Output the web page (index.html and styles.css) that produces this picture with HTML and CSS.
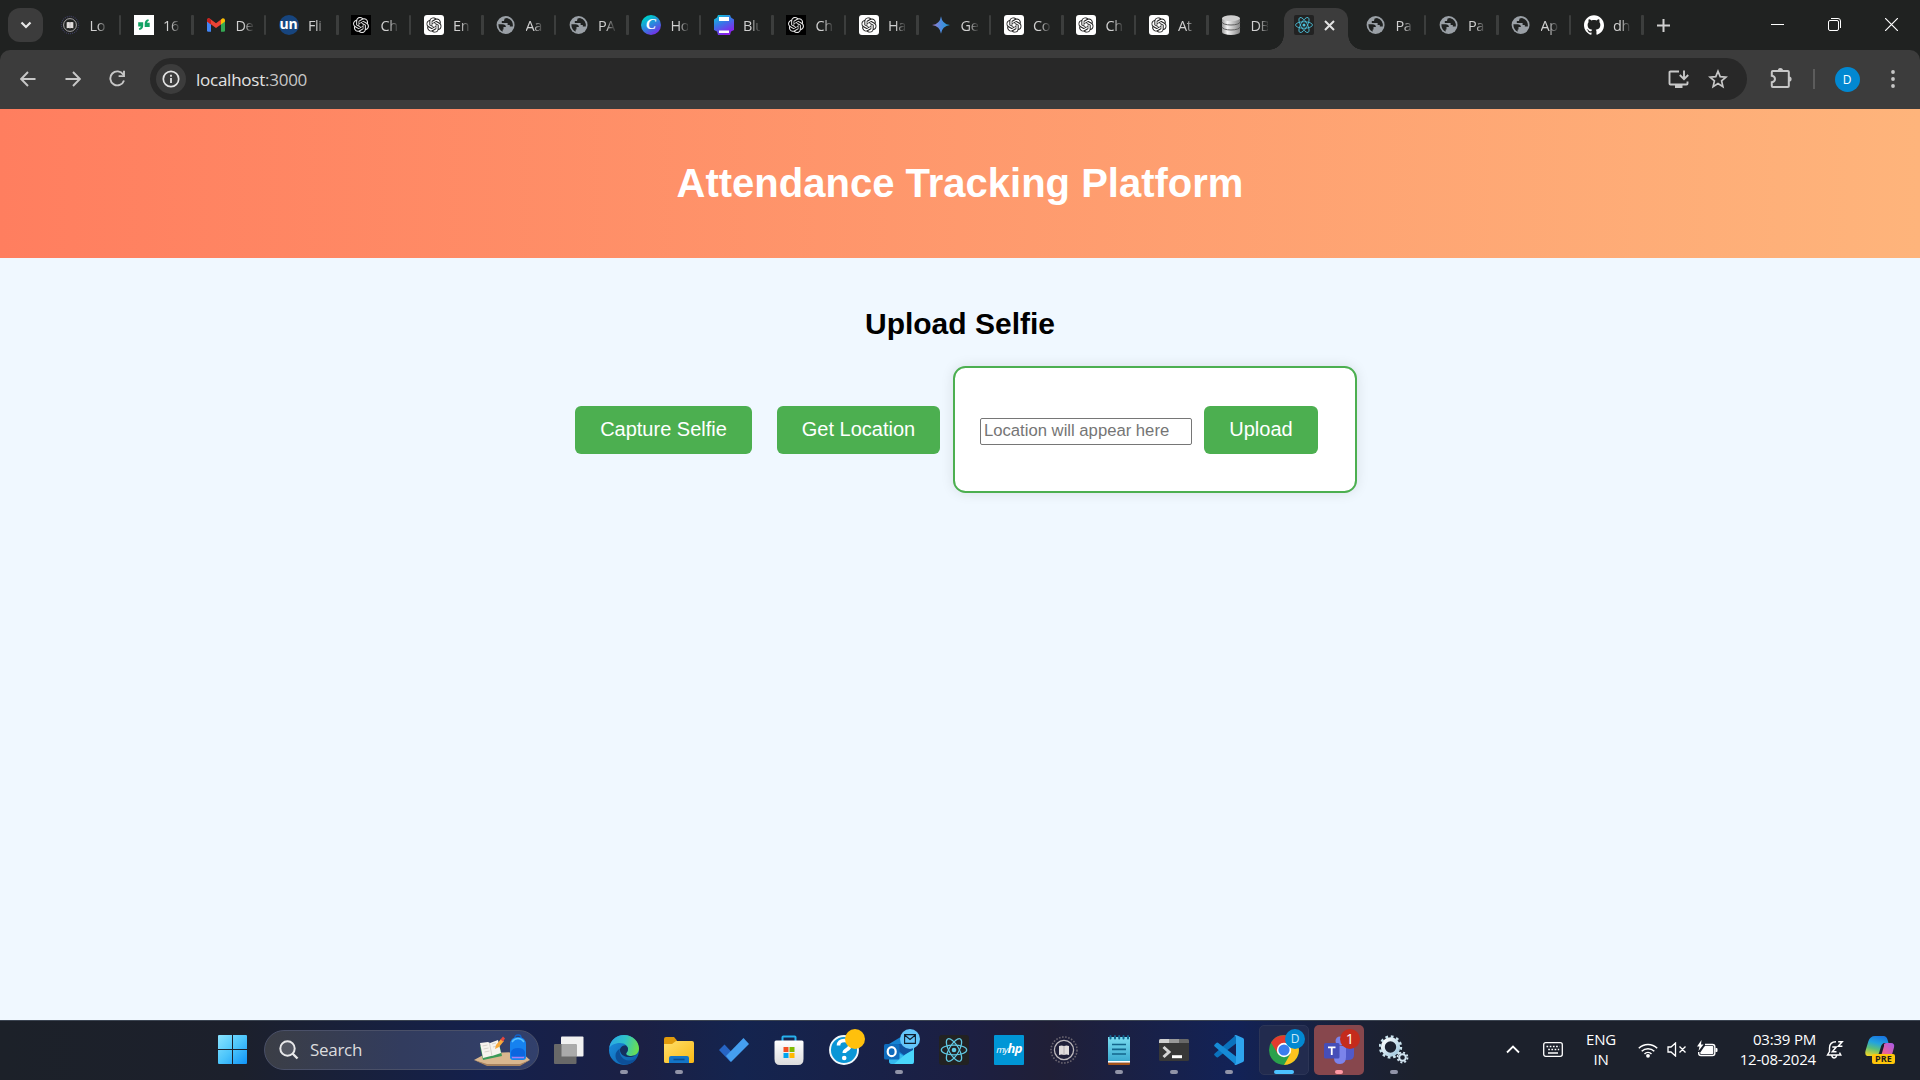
FILE: index.html
```html
<!DOCTYPE html>
<html lang="en">
<head>
<meta charset="utf-8">
<title>Attendance Tracking Platform</title>
<link rel="stylesheet" href="styles.css">
</head>
<body>
<svg class="sprite" aria-hidden="true">
  <defs>
    <linearGradient id="blue-g" x1="0" y1="0" x2=".5" y2="1"><stop offset="0" stop-color="#08cfd4"/><stop offset=".5" stop-color="#3a73e8"/><stop offset="1" stop-color="#8a22ec"/></linearGradient>
    <linearGradient id="gem-g" x1="0" y1="0" x2="1" y2="0"><stop offset="0" stop-color="#a57ac8"/><stop offset=".5" stop-color="#4c8ce0"/><stop offset="1" stop-color="#1c9ad0"/></linearGradient>
    <linearGradient id="db-g" x1="0" y1="0" x2="1" y2="0"><stop offset="0" stop-color="#9a9a9a"/><stop offset=".3" stop-color="#f4f4f4"/><stop offset="1" stop-color="#858585"/></linearGradient>
    <linearGradient id="win-g" gradientUnits="userSpaceOnUse" x1="0" y1="0" x2="29" y2="29"><stop offset="0" stop-color="#8be4ff"/><stop offset=".5" stop-color="#4cc5fb"/><stop offset="1" stop-color="#0f93f7"/></linearGradient>
    <linearGradient id="edge-g" x1="0" y1=".3" x2="1" y2=".5"><stop offset="0" stop-color="#2aa7e6"/><stop offset=".5" stop-color="#2fc3c9"/><stop offset="1" stop-color="#6be04e"/></linearGradient>
    <linearGradient id="edge-b" x1="0" y1="0" x2="1" y2="1"><stop offset="0" stop-color="#1b93e2"/><stop offset="1" stop-color="#0c59a4"/></linearGradient>
    <linearGradient id="folder-g" x1="0" y1="0" x2="1" y2="1"><stop offset="0" stop-color="#ffdf6b"/><stop offset="1" stop-color="#fbb914"/></linearGradient>
    <linearGradient id="note-g" x1="0" y1="0" x2="0" y2="1"><stop offset="0" stop-color="#7adcf0"/><stop offset="1" stop-color="#38a8cf"/></linearGradient>
    <linearGradient id="cop-a" x1=".6" y1="0" x2=".3" y2="1"><stop offset="0" stop-color="#1a78e0"/><stop offset=".35" stop-color="#22a3e0"/><stop offset=".65" stop-color="#5cbf7a"/><stop offset="1" stop-color="#e7d52c"/></linearGradient>
    <linearGradient id="cop-b" x1="1" y1="0" x2="0" y2="1"><stop offset="0" stop-color="#a45aea"/><stop offset=".6" stop-color="#e8609f"/><stop offset="1" stop-color="#fb8c4e"/></linearGradient>
    <linearGradient id="store-g" x1="0" y1="0" x2="0" y2="1"><stop offset="0" stop-color="#fff"/><stop offset="1" stop-color="#dcdcdc"/></linearGradient>
    <linearGradient id="gear-g" x1="0" y1="0" x2="1" y2="1"><stop offset="0" stop-color="#fff"/><stop offset="1" stop-color="#9ec6de"/></linearGradient>
  </defs>
  <symbol id="openai" viewBox="0 0 24 24"><path d="M22.2819 9.8211a5.9847 5.9847 0 0 0-.5157-4.9108 6.0462 6.0462 0 0 0-6.5098-2.9A6.0651 6.0651 0 0 0 4.9807 4.1818a5.9847 5.9847 0 0 0-3.9977 2.9 6.0462 6.0462 0 0 0 .7427 7.0966 5.98 5.98 0 0 0 .511 4.9107 6.051 6.051 0 0 0 6.5146 2.9001A5.9847 5.9847 0 0 0 13.2599 24a6.0557 6.0557 0 0 0 5.7718-4.2058 5.9894 5.9894 0 0 0 3.9977-2.9001 6.0557 6.0557 0 0 0-.7475-7.0729zm-9.022 12.6081a4.4755 4.4755 0 0 1-2.8764-1.0408l.1419-.0804 4.7783-2.7582a.7948.7948 0 0 0 .3927-.6813v-6.7369l2.02 1.1686a.071.071 0 0 1 .038.052v5.5826a4.504 4.504 0 0 1-4.4945 4.4944zm-9.6607-4.1254a4.4708 4.4708 0 0 1-.5346-3.0137l.142.0852 4.783 2.7582a.7712.7712 0 0 0 .7806 0l5.8428-3.3685v2.3324a.0804.0804 0 0 1-.0332.0615L9.74 19.9502a4.4992 4.4992 0 0 1-6.1408-1.6464zM2.3408 7.8956a4.485 4.485 0 0 1 2.3655-1.9728V11.6a.7664.7664 0 0 0 .3879.6765l5.8144 3.3543-2.0201 1.1685a.0757.0757 0 0 1-.071 0l-4.8303-2.7865A4.504 4.504 0 0 1 2.3408 7.872zm16.5963 3.8558L13.1038 8.364 15.1192 7.2a.0757.0757 0 0 1 .071 0l4.8303 2.7913a4.4944 4.4944 0 0 1-.6765 8.1042v-5.6772a.79.79 0 0 0-.407-.667zm2.0107-3.0231l-.142-.0852-4.7735-2.7818a.7759.7759 0 0 0-.7854 0L9.409 9.2297V6.8974a.0662.0662 0 0 1 .0284-.0615l4.8303-2.7866a4.4992 4.4992 0 0 1 6.6802 4.66zM8.3065 12.863l-2.02-1.1638a.0804.0804 0 0 1-.038-.0567V6.0742a4.4992 4.4992 0 0 1 7.3757-3.4537l-.142.0805L8.704 5.459a.7948.7948 0 0 0-.3927.6813zm1.0976-2.3654l2.602-1.4998 2.6069 1.4998v2.9994l-2.5974 1.4997-2.6067-1.4997Z" fill="currentColor"/></symbol>
  <symbol id="gpt-dark" viewBox="0 0 20 20"><rect width="20" height="20" fill="#000"/><use href="#openai" x="2" y="2" width="16" height="16" color="#e6e6e6"/></symbol>
  <symbol id="gpt-light" viewBox="0 0 20 20"><rect width="20" height="20" rx="3" fill="#fff"/><use href="#openai" x="2.3" y="2.3" width="15.4" height="15.4" color="#222"/></symbol>
  <symbol id="globe" viewBox="0 0 20 20"><circle cx="9.600" cy="10" r="9" fill="#9aa0a6"/><path d="M2.400 9.300H6.500q3.300 0 3.400 2.800H7.500v2.300h-.8l-.1 2.400Q2.300 14.500 2.400 9.300zM11 2.900L8.600 3.500 8 6H5.800v2h5.800v2h2.200v1.600h3Q17.500 5 11 2.900z" fill="#202221"/></symbol>
  <symbol id="seal" viewBox="0 0 30 30"><circle cx="15" cy="15" r="13" fill="none" stroke="var(--ring)" stroke-width="1.600" stroke-dasharray="1.600 1.500"/><circle cx="15" cy="15" r="9.600" fill="none" stroke="#bdb9bd" stroke-width="1.300"/><path d="M10 11q2.500-1 5 0q2.500-1 5 0v9q-2.500-1-5 0q-2.500-1-5 0z" fill="#e0dcdc"/><path d="M15 11v9" stroke="#a09ca0" stroke-width=".7"/></symbol>
  <symbol id="react" viewBox="0 0 30 30"><rect width="30" height="30" rx="3" fill="#222"/><circle cx="15" cy="15" r="2.300" fill="currentColor"/><g fill="none" stroke="currentColor" stroke-width="1.250"><ellipse cx="15" cy="15" rx="12.700" ry="4.900"/><ellipse cx="15" cy="15" rx="12.700" ry="4.900" transform="rotate(60 15 15)"/><ellipse cx="15" cy="15" rx="12.700" ry="4.900" transform="rotate(120 15 15)"/></g></symbol>
</svg>

<header class="tabstrip">
  <button class="tab-search" aria-label="Search tabs"><svg width="12" height="8" viewBox="0 0 12 8"><path d="M1.500 1.500L6 6l4.500-4.500" fill="none" stroke="#e8e8e8" stroke-width="2.200"/></svg></button>
  <nav class="tabs">
    <div class="tab first"><svg class="fav seal"><use href="#seal"/></svg><span>Lo</span></div>
    <div class="tab"><svg class="fav" viewBox="0 0 20 20"><rect width="20" height="20" fill="#fff"/><path d="M4.200 7.200h5v3.500q0 3.500-3.800 4.300l-.6-1.600q1.800-.5 2-2h-2.600zM15.700 12h-5V8.500q0-3.500 3.600-4.300l.6 1.600q-1.600.5-1.800 2h2.600z" fill="#12a365"/></svg><span>16</span></div>
    <div class="tab"><svg class="fav" viewBox="0 0 20 20"><path d="M1 6v9.500q0 1.300 1.300 1.300H5V8z" fill="#4285f4"/><path d="M19 6v9.500q0 1.300-1.300 1.300H15V8z" fill="#34a853"/><path d="M15 4.500V9.500l4-3V5q-.2-2-2.400-1.700z" fill="#fbbc04"/><path d="M1 5v1.500L10 13l5-3.500V4.500L10 8.200 4 3.700Q1.300 2.500 1 5z" fill="#ea4335"/><path d="M1 5v1.500l4 3V4.400L3.500 3.400Q1.200 3 1 5z" fill="#c5221f"/></svg><span>De</span></div>
    <div class="tab"><span class="fav un">un</span><span>Fli</span></div>
    <div class="tab"><svg class="fav"><use href="#gpt-dark"/></svg><span>Ch</span></div>
    <div class="tab"><svg class="fav"><use href="#gpt-light"/></svg><span>En</span></div>
    <div class="tab"><svg class="fav"><use href="#globe"/></svg><span>Aa</span></div>
    <div class="tab"><svg class="fav"><use href="#globe"/></svg><span>PA</span></div>
    <div class="tab"><span class="fav canva">C</span><span>Ho</span></div>
    <div class="tab"><svg class="fav" viewBox="0 0 20 20"><path d="M4 0h12l1 2.500 3 2V15l-3 1.500L16 20H4l-1-3.500L0 15V4.500l3-2z" fill="url(#blue-g)"/><path d="M5 2h10v4H5zM5 15.500h10V18H5z" fill="#fff"/></svg><span>Blu</span></div>
    <div class="tab"><svg class="fav"><use href="#gpt-dark"/></svg><span>Ch</span></div>
    <div class="tab"><svg class="fav"><use href="#gpt-light"/></svg><span>Ha</span></div>
    <div class="tab"><svg class="fav" viewBox="0 0 20 20"><path d="M10 1.200Q11 9 19 10Q11 11 10 18.800Q9 11 1 10Q9 9 10 1.200z" fill="url(#gem-g)"/></svg><span>Ge</span></div>
    <div class="tab"><svg class="fav"><use href="#gpt-light"/></svg><span>Co</span></div>
    <div class="tab"><svg class="fav"><use href="#gpt-light"/></svg><span>Ch</span></div>
    <div class="tab"><svg class="fav"><use href="#gpt-light"/></svg><span>At</span></div>
    <div class="tab before-active"><svg class="fav" viewBox="0 0 20 20"><path d="M1 3v14a9 3 0 0 0 18 0V3z" fill="url(#db-g)"/><ellipse cx="10" cy="3.200" rx="9" ry="2.900" fill="#cfcfcf"/><path d="M1 7a9 3 0 0 0 18 0M1 12a9 3 0 0 0 18 0" fill="none" stroke="#555" stroke-width=".9"/></svg><span>DB</span></div>
    <div class="tab active"><svg class="fav cyan"><use href="#react"/></svg><svg class="close" width="11" height="11" viewBox="0 0 11 11"><path d="M1 1l9 9M10 1l-9 9" stroke="#e3e3e3" stroke-width="2"/></svg></div>
    <div class="tab"><svg class="fav"><use href="#globe"/></svg><span>Pa</span></div>
    <div class="tab"><svg class="fav"><use href="#globe"/></svg><span>Pa</span></div>
    <div class="tab"><svg class="fav"><use href="#globe"/></svg><span>Ap</span></div>
    <div class="tab"><svg class="fav" viewBox="0 0 24 24"><path d="M12 .297c-6.630 0-12 5.373-12 12 0 5.303 3.438 9.800 8.205 11.385.6.113.82-.258.82-.577 0-.285-.01-1.040-.015-2.040-3.338.724-4.042-1.610-4.042-1.610C4.422 18.070 3.633 17.700 3.633 17.700c-1.087-.744.084-.729.084-.729 1.205.084 1.838 1.236 1.838 1.236 1.070 1.835 2.809 1.305 3.495.998.108-.776.417-1.305.76-1.605-2.665-.3-5.466-1.332-5.466-5.930 0-1.310.465-2.380 1.235-3.220-.135-.303-.54-1.523.105-3.176 0 0 1.005-.322 3.300 1.230.96-.267 1.980-.399 3-.405 1.020.006 2.040.138 3 .405 2.280-1.552 3.285-1.230 3.285-1.230.645 1.653.24 2.873.12 3.176.765.84 1.230 1.910 1.230 3.220 0 4.610-2.805 5.625-5.475 5.920.42.36.81 1.096.81 2.220 0 1.606-.015 2.896-.015 3.286 0 .315.21.69.825.57C20.565 22.092 24 17.592 24 12.297c0-6.627-5.373-12-12-12" fill="#fff"/></svg><span>dh</span></div>
  </nav>
  <button class="new-tab" aria-label="New tab"><svg width="13" height="13" viewBox="0 0 13 13"><path d="M6.500 0v13M0 6.500h13" stroke="#d0d0d0" stroke-width="2"/></svg></button>
  <div class="window-controls">
    <svg width="13" height="13" viewBox="0 0 13 13"><path d="M0 6.500h13" stroke="#fff"/></svg>
    <svg width="13" height="13" viewBox="0 0 13 13" fill="none" stroke="#fff"><rect x=".5" y="2.500" width="10" height="10" rx="1.500"/><path d="M3 .5h7q2.500 0 2.500 2.500v7"/></svg>
    <svg width="13" height="13" viewBox="0 0 13 13"><path d="M0 0l13 13M13 0L0 13" stroke="#fff" stroke-width="1.200"/></svg>
  </div>
</header>

<div class="toolbar-back">
<div class="toolbar">
  <button class="nav" aria-label="Back"><svg width="16" height="16" viewBox="0 0 16 16"><path d="M15.500 8H1.500M8 1L1.200 8 8 15" fill="none" stroke="#c7c7c7" stroke-width="1.900"/></svg></button>
  <button class="nav" aria-label="Forward"><svg width="16" height="16" viewBox="0 0 16 16"><path d="M.5 8h14M8 1l6.800 7L8 15" fill="none" stroke="#c7c7c7" stroke-width="1.900"/></svg></button>
  <button class="nav" aria-label="Reload"><svg width="17" height="17" viewBox="0 0 17 17"><path d="M14.200 4.500A7 7 0 1 0 15 10.500M15 .8v5.300H9.600" fill="none" stroke="#c7c7c7" stroke-width="1.900"/></svg></button>
  <div class="omnibox">
    <span class="site-info"><svg width="18" height="18" viewBox="0 0 18 18"><circle cx="9" cy="9" r="7.700" fill="none" stroke="#e3e3e3" stroke-width="1.700"/><path d="M9 8v5M9 4.800v1.900" stroke="#e3e3e3" stroke-width="1.800"/></svg></span>
    <span class="url">localhost<em>:3000</em></span>
    <svg class="install" width="21" height="19" viewBox="0 0 21 19"><path d="M11 1.500H2.500Q1.500 1.500 1.500 2.500v11q0 1 1 1h16q1 0 1-1V11.500M16 .5v8M11.800 5l4.200 4.200L20.200 5" fill="none" stroke="#c7c7c7" stroke-width="1.900"/><path d="M7 15h7.500v3H7z" fill="#c7c7c7"/></svg>
    <svg width="20" height="20" viewBox="0 0 20 20"><path d="M10 2.200l2.200 5.400 5.800.5-4.400 3.800 1.300 5.700-4.900-3-4.900 3 1.300-5.700L2 8.100l5.800-.5z" fill="none" stroke="#c7c7c7" stroke-width="1.700"/></svg>
  </div>
  <span class="extensions"><svg width="22" height="22" viewBox="0 0 22 22"><path d="M2.800 4h15q1 0 1 1v14q0 1-1 1h-15q-1 0-1-1v-3.800q3.200-.6 3.200-3.200t-3.200-3.200V5q0-1 1-1z" fill="none" stroke="#c7c7c7" stroke-width="2"/><path d="M7.800 3.500a2.600 2.600 0 0 1 5.200 0zM19 9.400a2.600 2.600 0 0 1 0 5.200z" fill="#c7c7c7"/></svg></span>
  <span class="divider"></span>
  <span class="profile"><b>D</b></span>
  <span class="menu"><svg width="4" height="18" viewBox="0 0 4 18" fill="#c7c7c7"><circle cx="2" cy="2" r="1.900"/><circle cx="2" cy="9" r="1.900"/><circle cx="2" cy="16" r="1.900"/></svg></span>
</div>
</div>

<main class="page">
  <div class="banner"><h1>Attendance Tracking Platform</h1></div>
  <section class="upload">
    <h2>Upload Selfie</h2>
    <div class="actions">
      <button class="btn capture">Capture Selfie</button>
      <button class="btn locate">Get Location</button>
      <form class="card">
        <input type="text" placeholder="Location will appear here">
        <button type="button" class="btn send">Upload</button>
      </form>
    </div>
  </section>
</main>

<footer class="taskbar">
  <svg class="start" width="29" height="29" viewBox="0 0 29 29"><path d="M0 1q0-1 1-1h13v14H0zM15 0h13q1 0 1 1v13H15zM0 15h14v14H1q-1 0-1-1zM15 15h14v13q0 1-1 1H15z" fill="url(#win-g)"/></svg>
  <div class="search">
    <svg width="20" height="20" viewBox="0 0 20 20"><circle cx="8.500" cy="8.500" r="7.200" fill="#ffffff22" stroke="#e8e8ea" stroke-width="2"/><path d="M13.500 13.500l5 5" stroke="#e8e8ea" stroke-width="2.400"/></svg>
    <span>Search</span>
    <svg class="highlight" width="58" height="32" viewBox="0 0 58 32">
      <path d="M1 26L14 19 48 18 57 26 47 31H14z" fill="#d9b78f"/><path d="M1 26l13 4h33l10-4-10 6H14z" fill="#a8835f"/>
      <path d="M7 12l3 14 19-4-3-13z" fill="#3b9a58"/><path d="M7 9l8-1 2 1 8-3 3 13-9 3-1 0-8 2z" fill="#f5f3ee"/><path d="M16.500 9l2.500 13M9.500 12l5-1M10.500 15l5-1M11.500 18l5-1M19 10l4-1M20 13l4-1" stroke="#c9c4bc" stroke-width=".7"/>
      <path d="M22 15l1-4 5-6 3 2-5 6z" fill="#f7a93c"/><path d="M27.500 5.500L30 2.500l2 2-2 3z" fill="#e4473e"/>
      <rect x="42" y="1" width="6" height="6" rx="2.500" fill="none" stroke="#1262c9" stroke-width="1.300"/><path d="M37 11q0-8 8-8t8 8v12q0 3-3 3H40q-3 0-3-3z" fill="#1682ef"/><path d="M38 18q1-4 7-4t7 4v4q-7 3-14 0z" fill="#0b66e0"/><path d="M39 8q2.500-3.500 6-3.500t6 3.500" fill="none" stroke="#5ac3ff" stroke-width="1.300"/><path d="M39 23.500h12" stroke="#a87ff2" stroke-width="1.500"/>
    </svg>
  </div>
  <div class="apps">
    <div class="app"><svg viewBox="0 0 30 30"><rect x="7" y="1.500" width="22.500" height="20" rx="1" fill="#f1f1f1"/><rect y="9" width="22.500" height="20" rx="1" fill="#686868"/><path d="M7.500 9h14q1 0 1 1v11.500H7.500z" fill="#aaa"/></svg></div>
    <div class="app run"><svg viewBox="0 0 30 30"><circle cx="15" cy="15" r="15" fill="url(#edge-b)"/><path d="M.2 13C1.500 5 7.500 0 15 0c9 0 15 6.500 15 13.500 0 4.500-3.500 7.500-7.800 7.500-4 0-5.200-1.600-5-2.600.1-.7 1.800-1.500 1.800-4.400C19 11 16 8 11 8 5.500 8 1.500 10.500.2 13z" fill="url(#edge-g)"/><path d="M11 13.500c-1.500 5 2 11.500 8.500 12 4 .3 6.500-1.200 8.300-2.300-3.500 5.500-10 7.500-15 5.800C5 26 4.500 17 11 13.500z" fill="#0d4f98"/><path d="M17.200 18.400c.1-.7 1.800-1.500 1.800-4.400 0-1.500-1-2.800-2.500-3.700-3.500.3-5.700 2.500-5.500 5.200.2 3.500 4 7.300 11 6.500 3-.3 5-1.700 6.200-3.200-1.600 1.400-3.700 2.200-6 2.200-4 0-5.200-1.600-5-2.600z" fill="#14305f"/></svg></div>
    <div class="app run"><svg viewBox="0 0 30 30"><path d="M0 4q0-2 2-2h8l3 3.500V12H0z" fill="#e09a0c"/><path d="M0 9h8l4-3h16q2 0 2 2v18.500q0 1.500-2 1.500H2q-2 0-2-1.500z" fill="url(#folder-g)"/><path d="M5 28v-5q0-2 2-2h16q2 0 2 2v5z" fill="#1375c8"/><path d="M9.500 24.500h11" stroke="#0b4d90" stroke-width="1.600"/></svg></div>
    <div class="app"><svg viewBox="0 0 30 30"><path d="M0 15l5.500-5.500 9.500 10L11.500 27z" fill="#2765c5"/><path d="M24.500 3l5.500 6-18 18-5-6z" fill="#459ff0"/></svg></div>
    <div class="app"><svg viewBox="0 0 30 30"><path d="M8.500 6V2.300q0-.8.8-.8h11.400q.8 0 .8.8V6" fill="none" stroke="#27b1ee" stroke-width="2"/><path d="M.5 7q0-1.500 1.500-1.500h26q1.500 0 1.500 1.500v17q0 6-5.500 6H6q-5.500 0-5.500-6z" fill="url(#store-g)"/><path d="M9.500 12h5v5h-5z" fill="#f25022"/><path d="M15.500 12h5v5h-5z" fill="#7fba00"/><path d="M9.500 18h5v5h-5z" fill="#00a4ef"/><path d="M15.500 18h5v5h-5z" fill="#ffb900"/></svg></div>
    <div class="app help"><svg viewBox="0 0 30 30"><circle cx="15" cy="15" r="14" fill="#0a96d6" stroke="#f2f8fb" stroke-width="1.900"/><path d="M9.500 10.500q0-5 5.800-5 5.700 0 5.700 4.500 0 3-3.500 4.800-2.200 1.200-2.200 3.200" fill="none" stroke="#fff" stroke-width="3.600"/><circle cx="15.200" cy="23" r="2.300" fill="#fff"/></svg><i class="badge amber"></i></div>
    <div class="app run"><svg viewBox="0 0 30 30"><path d="M5 9L20 0l10 9v17q0 3-3 3H8q-3 0-3-3z" fill="#1683d3"/><path d="M5 11l25 17q-1 1-3 1H8q-3 0-3-3z" fill="#35b9ee"/><path d="M30 12v14q0 3-3 3H10z" fill="#4ad7fb"/><path d="M13 9h16v6l-9 5-7-5z" fill="#10529f"/><rect y="9" width="15.500" height="15.500" rx="1.500" fill="#0f6cbd"/><ellipse cx="7.700" cy="16.700" rx="4" ry="4.500" fill="none" stroke="#fff" stroke-width="2.200"/></svg><i class="badge mail"><svg viewBox="0 0 12 10"><path d="M.6.6h10.800v8.800H.6zM.6 1L6 5.500 11.400 1" fill="none" stroke="#102030" stroke-width="1.100"/></svg></i></div>
    <div class="app react"><svg><use href="#react"/></svg></div>
    <div class="app"><span class="myhp">my<b>hp</b></span></div>
    <div class="app sealapp"><svg><use href="#seal"/></svg></div>
    <div class="app run"><svg viewBox="0 0 30 30"><path d="M4 2h22v25H4z" fill="url(#note-g)"/><path d="M4 26h22v1.800H4z" fill="#fff"/><path d="M4 27.800h22V29q0 1-1 1H5q-1 0-1-1z" fill="#a4531a"/><path d="M6.500 1v2.500M11 1v2.500M15.200 1v2.500M19.500 1v2.500M24 1v2.500" stroke="#12648e" stroke-width="2" stroke-linecap="round"/><path d="M8 9.500h14M8 14.300h14M8 19h14" stroke="#13658c" stroke-width="1.700"/></svg></div>
    <div class="app run"><svg viewBox="0 0 30 30"><rect y="4" width="30" height="22" rx="1.500" fill="#383838"/><path d="M0 8V5.500Q0 4 1.500 4H10v4z" fill="#d0d0d0"/><path d="M10 4h10v4H10z" fill="#999"/><path d="M20 4h8.500Q30 4 30 5.500V8H20z" fill="#686868"/><path d="M4.500 12l5.500 5-5.500 5" fill="none" stroke="#d5d5d5" stroke-width="3"/><path d="M13 21.700h10" stroke="#fff" stroke-width="3"/></svg></div>
    <div class="app run"><svg viewBox="0 0 30 30"><path d="M22 0v8.500L4 22.200q-1 .6-1.800-.2L.5 20.300q-.8-1 .2-1.800z" fill="#0a72bd"/><path d="M22 30v-8.500L4 7.800q-1-.6-1.800.2L.5 9.700q-.8 1 .2 1.800z" fill="#168bd6"/><path d="M22 0l7 3q1 .5 1 1.700v20.600q0 1.200-1 1.700l-7 3q-1 0-2-1.200 2 .7 2-1.300v-25q0-2-2-1.300Q21 0 22 0z" fill="#2ea4ee"/></svg></div>
    <div class="app chrome"><svg viewBox="0 0 30 30"><circle cx="15" cy="15" r="15" fill="#2aa14b"/><path d="M15 8h13.200A15 15 0 0 1 15 30l6.300-11z" fill="#fcc31e"/><path d="M2 7.500L9 19l6-11h13A15 15 0 0 0 2 7.500z" fill="#e33b2e"/><circle cx="15" cy="15" r="7.200" fill="#fff"/><circle cx="15" cy="15" r="5.600" fill="#3b7ded"/></svg><i class="badge user">D</i></div>
    <div class="app teams"><svg viewBox="0 0 30 30"><circle cx="16" cy="6" r="4.500" fill="#7b83eb"/><path d="M20 11h8q2 0 2 2v7q0 5-6 5h-4z" fill="#5059c9"/><path d="M10 11h12v11q0 7-6 7t-6-6z" fill="#7b83eb"/><rect y="8" width="15.500" height="15.500" rx="1.500" fill="#464eb8"/><path d="M4 12.300h7.500M7.750 12.300V20" stroke="#fff" stroke-width="1.800"/></svg><i class="badge alert">1</i></div>
    <div class="app run"><svg viewBox="0 0 30 30"><circle cx="11.500" cy="12" r="7.700" fill="none" stroke="url(#gear-g)" stroke-width="4"/><circle cx="11.500" cy="12" r="10.400" fill="none" stroke="#c9e2ec" stroke-width="2.600" stroke-dasharray="2.700 2.746"/><circle cx="23.500" cy="22.500" r="3.300" fill="none" stroke="#d3e5f1" stroke-width="2"/><circle cx="23.500" cy="22.500" r="5" fill="none" stroke="#d3e5f1" stroke-width="1.800" stroke-dasharray="1.963"/></svg></div>
  </div>
  <div class="tray">
    <span class="t40"><svg width="14" height="9" viewBox="0 0 14 9"><path d="M1 7.500l6-6 6 6" fill="none" stroke="#fff" stroke-width="1.800"/></svg></span>
    <span class="t40"><svg width="20" height="15" viewBox="0 0 20 15"><rect x=".7" y=".7" width="18.600" height="13.600" rx="2" fill="none" stroke="#fff" stroke-width="1.300"/><path d="M3.500 4.500h13M5.200 7.500h11" stroke="#fff" stroke-width="1.700" stroke-dasharray="1.700 1.500"/><path d="M5 11h10" stroke="#fff" stroke-width="1.500"/></svg></span>
    <span class="lang">ENG<br>IN</span>
    <span class="wifi"><svg width="20" height="16" viewBox="0 0 20 16"><path d="M.8 6.200a13 13 0 0 1 18.400 0M3.700 9.200a9 9 0 0 1 12.600 0M6.500 12a5 5 0 0 1 7 0" fill="none" stroke="#fff" stroke-width="1.500"/><circle cx="10" cy="13.800" r="1.900" fill="#fff"/></svg></span>
    <span class="volume"><svg width="20" height="15" viewBox="0 0 20 15"><path d="M1 5h3l4.500-4v13L4 10H1zM12.500 4.500l6 6M18.500 4.500l-6 6" fill="none" stroke="#fff" stroke-width="1.300"/></svg></span>
    <span class="battery"><svg width="21" height="17" viewBox="0 0 21 17"><path d="M8 4.500h7.500q2.300 0 2.300 2.300v6.400q0 2.300-2.300 2.300H4q-2.300 0-2.300-2.300V12" fill="none" stroke="#fff" stroke-width="1.400"/><path d="M7 7l1-1h7.500q.8 0 .8.8v6.400q0 .8-.8.8H4l-1-1zM18.500 8h1q1 0 1 1v2q0 1-1 1h-1zM4.500 0L0 6.500h2.500L1.500 11 6.500 4.500H4z" fill="#fff"/></svg></span>
    <span class="clock">03:39 PM<br>12-08-2024</span>
    <span class="bell"><svg width="18" height="19" viewBox="0 0 18 19"><path d="M10 1.700Q3.500 1.700 3.500 8v3.500L1.500 15h13.300l-1.300-2.300M5.700 15.500q.7 2.500 2.500 2.500t2.500-2.500" fill="none" stroke="#fff" stroke-width="1.400"/><path d="M6.300 7h4l-4 4.800h4.200M12.200 1.700h4l-4 4.600h4.200" fill="none" stroke="#fff" stroke-width="1.500"/></svg></span>
    <span class="copilot"><svg width="30" height="28" viewBox="0 0 30 28"><path d="M2 20Q-.5 19 .6 14.500L3.300 5.500Q5 0 10 0h8.500q3 0 4 3.500l1 3.500H20q-3 0-4 3.500l-2 6.500q-1.200 3-4 3z" fill="url(#cop-a)"/><path d="M18 7h8q4 0 3 4.500l-2 7q-1 3.500-5 3.500h-8q2-1 3-5l2-7q.7-2-1-3z" fill="url(#cop-b)"/><path d="M18 7h3.500q-3 0-4 3.500l-2.500 7.500q-1 2-3 2h2q1.500-1.500 2.500-4l2-6.500q.6-2-.5-2.500z" fill="#151b2c"/></svg><i>PRE</i></span>
  </div>
</footer>
</body>
</html>
```
FILE: styles.css
```css
* { box-sizing: border-box; }
body {
  margin: 0;
  width: 1920px;
  height: 1080px;
  display: flex;
  flex-direction: column;
  overflow: hidden;
  font-family: "Open Sans", "Noto Sans", sans-serif;
  background: #f0f8ff;
}
button { border: 0; padding: 0; background: none; font: inherit; }
svg { display: block; flex: none; }
.sprite { position: absolute; width: 0; height: 0; }

/* Tab strip */
.tabstrip { height: 50px; flex: none; display: flex; background: #202221; padding-left: 8px; }
.tab-search { width: 35px; height: 34px; margin: 8px 5.5px 0 0; border-radius: 12px; background: #3c3c3c; display: grid; place-items: center; }
.tabs { display: flex; width: 1595px; }
.tab { position: relative; width: 72.5px; flex: none; height: 50px; padding-left: 12.5px; display: flex; align-items: center; gap: 10px; }
.tab::after { content: ""; position: absolute; right: 0; top: 15px; width: 2.5px; height: 20px; border-radius: 1px; background: #3c3e3d; }
.tab.before-active::after { display: none; }
.tab.first { padding-left: 11.5px; }
.tab span:last-child {
  width: 17px; margin-left: -.5px; overflow: hidden; white-space: nowrap;
  font-size: 14.5px; letter-spacing: -.4px; line-height: 22px; padding-top: 1px; color: #d0d0d0;
  -webkit-mask-image: linear-gradient(90deg, #000 45%, rgba(0,0,0,.2) 92%);
  mask-image: linear-gradient(90deg, #000 45%, rgba(0,0,0,.2) 92%);
}
.fav { width: 20px; height: 20px; flex: none; position: relative; z-index: 1; }
.fav.seal { --ring: #3f3f62; }
.fav.cyan { color: #4cc3dd; }
.un { border-radius: 50%; background: #17457e; color: #fff; font: bold 14px/17px "Open Sans", sans-serif; text-align: center; letter-spacing: -.3px; }
.canva { border-radius: 50%; background: linear-gradient(150deg, #00c8cc 20%, #2c86dd 50%, #7a26e8 90%); color: #fff; font: italic bold 15px/19px "Liberation Serif", serif; text-align: center; }
.tab.active::before {
  content: ""; position: absolute; left: 2.5px; right: 5.5px; top: 7.5px; bottom: 0;
  border-radius: 12px 12px 0 0; background: #3c3c3c;
}
.tab.active::after {
  left: -12.5px; right: -9.5px; top: 35px; width: auto; height: 15px; border-radius: 0;
  background:
    radial-gradient(circle at 0 0, transparent 14.5px, #3c3c3c 15px) left / 15px 15px no-repeat,
    radial-gradient(circle at 100% 0, transparent 14.5px, #3c3c3c 15px) right / 15px 15px no-repeat;
}
.close { position: relative; z-index: 1; }
.new-tab { width: 39px; display: grid; place-items: center; }
.window-controls { display: flex; margin-left: auto; padding: 18px 22.5px 0 0; gap: 44px; }

/* Toolbar */
.toolbar-back { background: #202221; flex: none; }
.toolbar { height: 59px; display: flex; align-items: center; padding: 0 14px 1px 5px; background: #3c3c3c; border-radius: 10px 10px 0 0; }
.nav { width: 45px; height: 45px; padding-bottom: 1px; display: grid; place-items: center; }
.omnibox { width: 1597px; height: 42px; margin-left: 10px; padding: 0 19.5px 0 6px; border-radius: 21px; background: #282828; display: flex; align-items: center; }
.site-info { width: 30px; height: 30px; border-radius: 50%; background: #3c3c3c; display: grid; place-items: center; }
.url { margin-left: 10px; flex: 1; font-size: 17px; letter-spacing: -.25px; color: #e3e3e3; }
.url em { font-style: normal; color: #c7c7c7; }
.install { margin-right: 19px; }
.extensions { width: 66px; padding: 0 0 2px 2px; display: grid; place-items: center; }
.divider { width: 2px; height: 20px; background: #5c5c5c; }
.profile { width: 64px; display: grid; place-items: center; }
.profile b { width: 25px; height: 25px; border-radius: 50%; background: #0288d1; color: #fff; font-weight: 400; font-size: 12px; line-height: 25px; text-align: center; }
.menu { width: 27px; display: grid; place-items: center; }

/* Page */
.page { flex: 1; font-family: "Liberation Sans", Arial, sans-serif; color: #000; }
.banner { height: 149px; padding-bottom: 2px; display: grid; place-items: center; background: linear-gradient(90deg, #ff7e5f, #feb47b); color: #fff; }
.banner h1 { margin: 0; font-size: 40px; line-height: 46px; }
.upload { display: flex; flex-direction: column; align-items: center; padding-top: 49px; }
.upload h2 { margin: 0 0 25px; font-size: 30px; line-height: 34px; }
.actions { display: flex; align-items: center; padding-left: 12px; }
.btn { height: 48px; border-radius: 6px; background: #4caf50; color: #fff; font-size: 20px; }
.capture { width: 177px; margin-right: 25px; }
.locate { width: 163px; margin-right: 13px; }
.send { width: 114px; }
.card { width: 404px; height: 127px; display: flex; align-items: center; gap: 12px; padding: 0 25px; border: 2px solid #4caf50; border-radius: 12.5px; background: #fff; box-shadow: 0 0 12.5px rgba(0, 0, 0, .1); }
.card input { width: 212px; height: 27px; margin: 3px 0 0; padding: 0 3px; border: 1px solid #767676; border-radius: 2px; font: 16.67px "Liberation Sans", Arial, sans-serif; }
.card input::placeholder { color: #757575; }

/* Taskbar */
.taskbar {
  height: 60px; flex: none; display: flex; align-items: center; padding: 0 0 2px 218px; color: #fff;
  border-top: 1px solid #3b4451;
  background: linear-gradient(90deg, #1c2129 0, #1c202c 240px, #14204c 480px, #1b2044 640px, #14244f 740px, #1c1f42 970px, #201f37 1050px, #122257 1235px, #1b2135 1360px, #1c212c 1420px, #1c212c 100%);
}
.search { width: 275px; height: 40px; margin: 0 2.5px 0 17px; padding: 0 7px 0 14px; display: flex; align-items: center; border-radius: 20px; background: linear-gradient(90deg, #3b3e46, #323c5e 50%, #32406c); border: 1px solid #4a5068; }
.search span { flex: 1; margin-left: 11px; font-size: 17px; letter-spacing: -.3px; color: #dcdcde; }
.apps { display: flex; }
.app { position: relative; width: 50px; height: 50px; margin: 0 2.5px; border-radius: 5px; display: grid; place-items: center; }
.app > svg { width: 30px; height: 30px; }
.app.run::after, .chrome::after, .teams::after { content: ""; position: absolute; left: 21px; bottom: 1px; width: 8px; height: 4px; border-radius: 2px; background: #9194a8; }
.app.chrome { background: #222b4e; border: 1px solid #2c3556; }
.app.chrome::after { left: 14px; bottom: 0; width: 20px; background: #4cc2ff; }
.app.teams { background: #87474d; }
.app.teams::after { background: #ff99a4; }
.app.react { color: #61c9e3; }
.app.sealapp { --ring: #6a6570; }
.badge { position: absolute; right: 4px; top: 4px; width: 20px; height: 20px; border-radius: 50%; font-style: normal; text-align: center; display: grid; place-items: center; }
.amber { background: #ffc00c; right: 4px; }
.mail { background: #63c5fa; right: 4px; }
.mail svg { width: 12px; height: 10px; }
.user { background: #0288d1; color: #cde9f8; font-size: 12px; line-height: 20px; right: 3px; top: 3px; }
.alert { background: #c42b1c; font-size: 14.5px; line-height: 20px; }
.help > svg { margin-right: 1px; }
.myhp { width: 30px; height: 30px; border-radius: 1px; background: #0096d6; font: italic 9.5px/27px "Open Sans", sans-serif; text-align: center; letter-spacing: -.7px; }
.myhp b { font-size: 13px; }
.tray { display: flex; align-items: center; margin-left: auto; padding-right: 14px; font-size: 15px; line-height: 20px; letter-spacing: -.2px; }
.tray span { display: grid; place-items: center; }
.tray .t40 { width: 40px; }
.tray .lang, .tray .clock { display: block; text-align: center; padding-bottom: 1px; }
.tray .lang { width: 56px; }
.wifi { width: 38px; }
.volume { width: 20px; }
.battery { width: 42px; padding: 0 1px 2px 0; }
.tray .clock { width: 87px; text-align: right; white-space: nowrap; }
.bell { width: 38px; }
.copilot { position: relative; width: 52px; }
.copilot i { position: absolute; left: 18px; top: 18px; width: 23px; height: 10px; border-radius: 2px; background: #ffc60a; color: #1c1c1c; font: bold 9px/10px "Open Sans", sans-serif; text-align: center; letter-spacing: .2px; }
```
